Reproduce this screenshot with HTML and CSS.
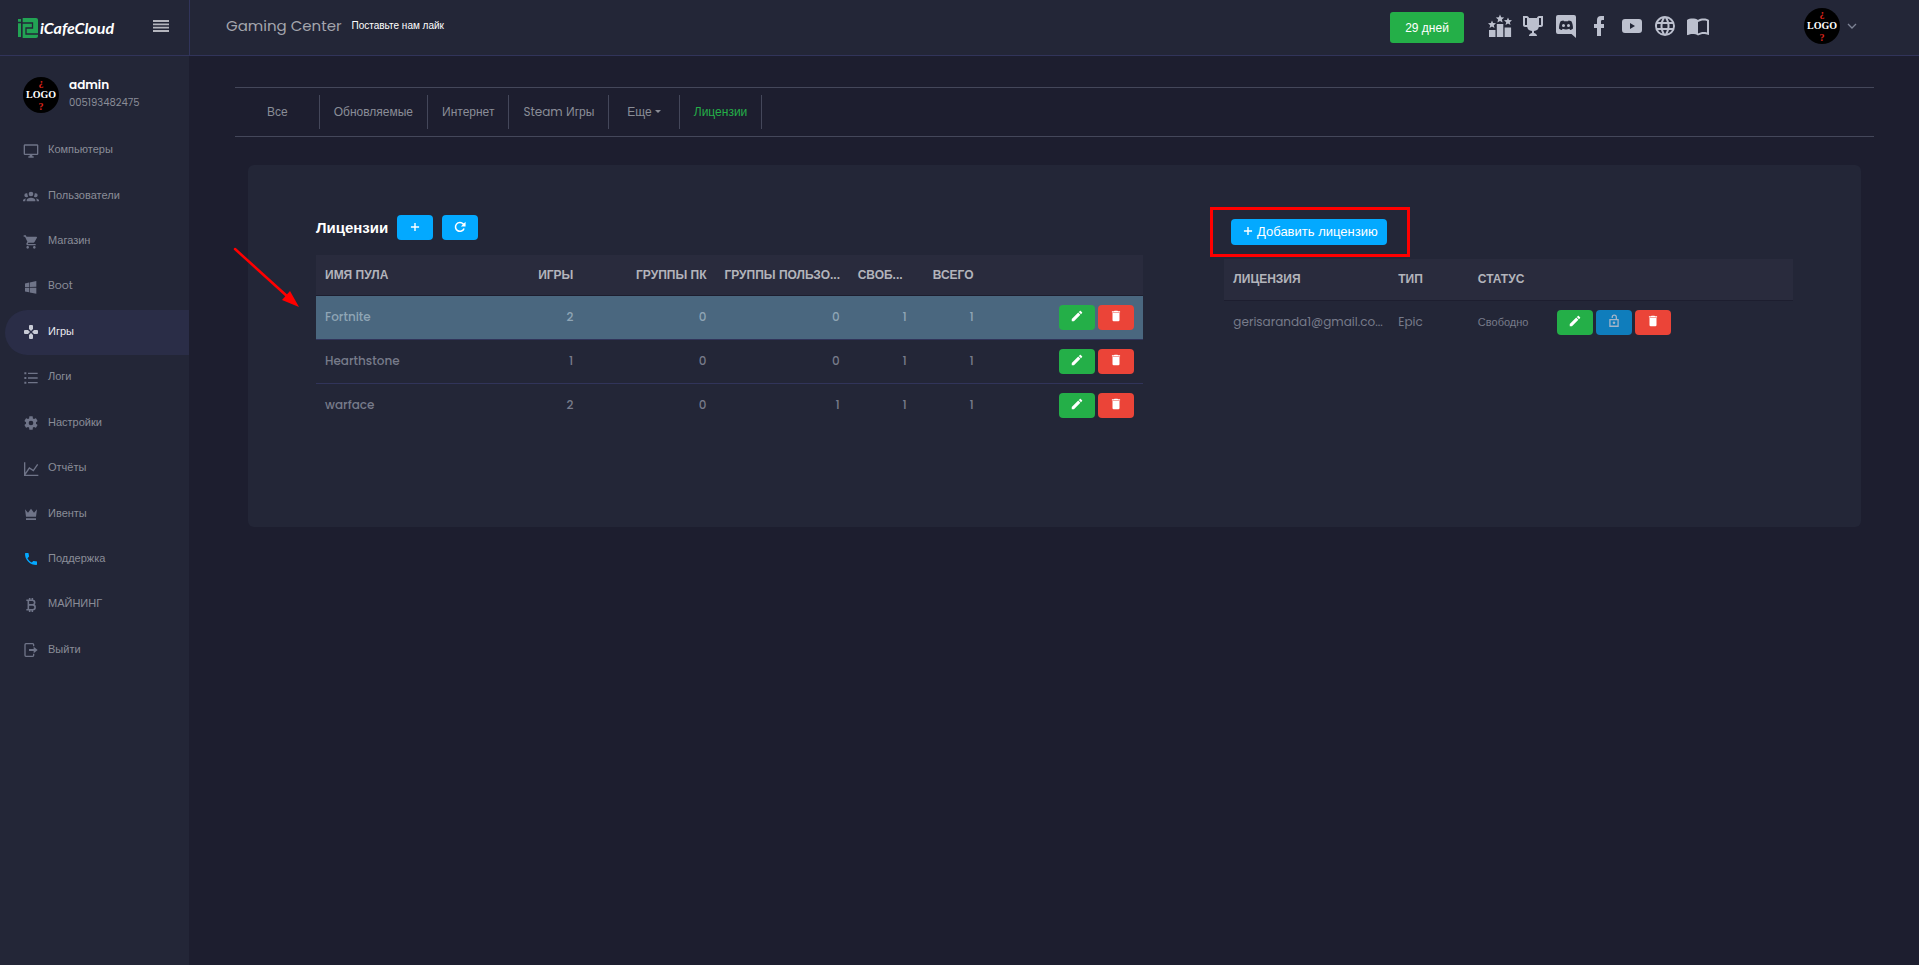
FILE: index.html
```html
<!DOCTYPE html>
<html lang="ru">
<head>
<meta charset="utf-8">
<title>iCafeCloud</title>
<link rel="stylesheet" href="styles.css">
</head>
<body>
<svg class="sprite" aria-hidden="true">
  <symbol id="pencil" viewBox="0 0 24 24"><path d="M20.7 7c.4-.4.4-1 0-1.400l-2.300-2.300c-.4-.4-1-.4-1.400 0l-1.900 1.800 3.800 3.800M3 17.200V21h3.800L17.800 9.900l-3.700-3.700z"/></symbol>
  <symbol id="trash" viewBox="0 0 24 24"><path d="M19 4h-3.500l-1-1h-5l-1 1H5v2h14M6 19a2 2 0 0 0 2 2h8a2 2 0 0 0 2-2V7H6z"/></symbol>
  <symbol id="plus" viewBox="0 0 24 24"><path d="M19 13.200h-5.800V19h-2.400v-5.800H5v-2.400h5.800V5h2.400v5.800H19z"/></symbol>
</svg>

<header class="topbar">
  <div class="brand">
    <a class="logo" href="#">
      <svg width="20" height="20" viewBox="0 0 20 20" aria-hidden="true">
        <path fill="#22a354" d="M0 1h3v3H0zM0 5h3v14H0zM4 0h14a2 2 0 0 1 2 2v16a2 2 0 0 1-2 2H4v-1z"/>
        <path fill="none" stroke="#232637" stroke-width="1.300" d="M4 0v20M4 5h10.500v5H8v6h12M0 4.500h4"/>
      </svg>
      <span>iCafeCloud</span>
    </a>
    <button class="menu-toggle" aria-label="Меню">
      <svg width="16" height="12" viewBox="0 0 16 12"><path d="M0 1h16M0 4.300h16M0 7.600h16M0 11h16" stroke="currentColor" stroke-width="1.800"/></svg>
    </button>
  </div>
  <div class="center-name latin">Gaming Center</div>
  <a class="like" href="#">Поставьте нам лайк</a>
  <button class="days">29 дней</button>
  <nav class="socials" aria-label="Ссылки">
    <a href="#" aria-label="Рейтинг"><svg viewBox="0 0 24 24"><path d="M1 16h6.500v7H1zM8.800 10h6.500v13H8.800zM16.600 13.500h6.500V23h-6.500zM12 .5l1.200 2.800 3 .3-2.300 2 .7 3L12 7 9.400 8.600l.7-3-2.300-2 3-.3zM4 6.500l1.100 2.600 2.900.2-2.200 1.900.7 2.800L4 12.500 1.500 14l.7-2.800L0 9.300l2.900-.2zM20 3.500l1.100 2.600 2.900.2-2.200 1.900.7 2.800-2.500-1.500-2.500 1.500.7-2.800L16 6.300l2.900-.2z"/></svg></a>
    <a href="#" aria-label="Турниры"><svg viewBox="0 0 24 24"><path d="M18 2C17.100 2 16 3 16 4H8C8 3 6.900 2 6 2H2V11C2 12 3 13 4 13H6.200C6.600 15 7.900 16.700 11 17V19.080C8 19.540 8 22 8 22H16C16 22 16 19.540 13 19.080V17C16.100 16.700 17.400 15 17.800 13H20C21 13 22 12 22 11V2H18M6 11H4V4H6V11M20 11H18V4H20V11Z"/></svg></a>
    <a href="#" aria-label="Discord"><svg viewBox="0 0 24 24"><path fill-rule="evenodd" d="M4 1h16a2 2 0 0 1 2 2v21l-4.500-4H4a2 2 0 0 1-2-2V3a2 2 0 0 1 2-2zM9.500 6.500C7.500 6.700 6.500 7.500 6.500 7.500 5.500 9.500 5 12 5 14.500c1 1.200 2.800 1.500 2.800 1.500l.9-1.200c2 .8 4.600.8 6.600 0l.9 1.200s1.800-.3 2.800-1.500c0-2.500-.5-5-1.500-7 0 0-1-.8-3-1l-.4.8h-4.200zM9.500 10a1.500 1.500 0 1 1 0 3 1.500 1.500 0 0 1 0-3zM14.500 10a1.500 1.500 0 1 1 0 3 1.500 1.500 0 0 1 0-3z"/></svg></a>
    <a href="#" aria-label="Facebook"><svg viewBox="0 0 24 24"><path d="M17,2V6H15C14.310,6 14,6.810 14,7.500V10H17V14H14V22H10V14H7V10H10V6A4,4 0 0,1 14,2Z"/></svg></a>
    <a href="#" aria-label="YouTube"><svg viewBox="0 0 24 24"><path fill-rule="evenodd" d="M5 5h14a3 3 0 0 1 3 3v8a3 3 0 0 1-3 3H5a3 3 0 0 1-3-3V8a3 3 0 0 1 3-3zM10 9v6l5-3z"/></svg></a>
    <a href="#" aria-label="Сайт"><svg viewBox="0 0 24 24"><path d="M16.360,14C16.440,13.340 16.500,12.680 16.500,12C16.500,11.320 16.440,10.660 16.360,10H19.740C19.900,10.640 20,11.310 20,12C20,12.690 19.900,13.360 19.740,14M14.590,19.560C15.190,18.450 15.650,17.250 15.970,16H18.920C17.960,17.650 16.430,18.930 14.590,19.560M14.340,14H9.660C9.560,13.340 9.500,12.680 9.500,12C9.500,11.320 9.560,10.650 9.660,10H14.340C14.430,10.650 14.500,11.320 14.500,12C14.500,12.680 14.430,13.340 14.340,14M12,19.960C11.170,18.760 10.500,17.430 10.090,16H13.910C13.500,17.430 12.830,18.760 12,19.960M8,8H5.080C6.030,6.340 7.570,5.060 9.400,4.440C8.800,5.550 8.350,6.750 8,8M5.080,16H8C8.350,17.250 8.800,18.450 9.400,19.560C7.570,18.930 6.030,17.650 5.080,16M4.260,14C4.100,13.360 4,12.690 4,12C4,11.310 4.100,10.640 4.260,10H7.640C7.560,10.660 7.500,11.320 7.500,12C7.500,12.680 7.560,13.340 7.640,14M12,4.030C12.830,5.230 13.500,6.570 13.910,8H10.090C10.500,6.570 11.170,5.230 12,4.030M18.920,8H15.970C15.650,6.750 15.190,5.550 14.590,4.440C16.430,5.070 17.960,6.340 18.920,8M12,2C6.470,2 2,6.500 2,12A10,10 0 0,0 12,22A10,10 0 0,0 22,12A10,10 0 0,0 12,2Z"/></svg></a>
    <a href="#" aria-label="Справка"><svg viewBox="0 0 24 24"><path d="M21,5C19.890,4.650 18.670,4.500 17.500,4.500C15.550,4.500 13.450,4.900 12,6C10.550,4.900 8.450,4.500 6.500,4.500C4.550,4.500 2.450,4.900 1,6V20.650C1,20.900 1.250,21.150 1.500,21.150C1.600,21.150 1.650,21.100 1.750,21.100C3.100,20.450 5.050,20 6.500,20C8.450,20 10.550,20.400 12,21.500C13.350,20.650 15.800,20 17.500,20C19.150,20 20.850,20.300 22.250,21.050C22.350,21.100 22.400,21.100 22.500,21.100C22.750,21.100 23,20.850 23,20.600V6C22.400,5.550 21.750,5.250 21,5M21,18.500C19.900,18.150 18.700,18 17.500,18C15.800,18 13.350,18.650 12,19.500V8C13.350,7.150 15.800,6.500 17.500,6.500C18.700,6.500 19.900,6.650 21,7V18.500Z"/></svg></a>
  </nav>
  <button class="account" aria-label="Аккаунт">
    <span class="avatar"><i>¿</i><b>LOGO</b><i>?</i></span>
    <svg width="10" height="6" viewBox="0 0 10 6"><path d="M1 1l4 4 4-4" fill="none" stroke="#7d8395" stroke-width="1.300"/></svg>
  </button>
</header>

<div class="shell">
  <aside class="sidebar">
    <div class="profile">
      <span class="avatar"><i>¿</i><b>LOGO</b><i>?</i></span>
      <div class="profile-text latin">
        <div class="profile-name">admin</div>
        <div class="profile-id">005193482475</div>
      </div>
    </div>
    <nav class="side-nav">
      <a href="#"><svg viewBox="0 0 24 24"><path d="M21,16H3V4H21M21,2H3C1.890,2 1,2.890 1,4V16A2,2 0 0,0 3,18H10V20H8V22H16V20H14V18H21A2,2 0 0,0 23,16V4C23,2.890 22.100,2 21,2Z"/></svg><span>Компьютеры</span></a>
      <a href="#"><svg viewBox="0 0 24 24"><path d="M12,5.500A3.500,3.500 0 0,1 15.500,9A3.500,3.500 0 0,1 12,12.500A3.500,3.500 0 0,1 8.500,9A3.500,3.500 0 0,1 12,5.500M5,8C5.560,8 6.080,8.150 6.530,8.420C6.380,9.850 6.800,11.270 7.660,12.380C7.160,13.340 6.160,14 5,14A3,3 0 0,1 2,11A3,3 0 0,1 5,8M19,8A3,3 0 0,1 22,11A3,3 0 0,1 19,14C17.840,14 16.840,13.340 16.340,12.380C17.200,11.270 17.620,9.850 17.470,8.420C17.920,8.150 18.440,8 19,8M5.500,18.250C5.500,16.180 8.410,14.500 12,14.500C15.590,14.500 18.500,16.180 18.500,18.250V20H5.500V18.250M0,20V18.500C0,17.110 1.890,15.940 4.450,15.600C3.860,16.280 3.500,17.220 3.500,18.250V20H0M24,20H20.500V18.250C20.500,17.220 20.140,16.280 19.550,15.600C22.110,15.940 24,17.110 24,18.500V20Z"/></svg><span>Пользователи</span></a>
      <a href="#"><svg viewBox="0 0 24 24"><path d="M17,18C15.890,18 15,18.890 15,20A2,2 0 0,0 17,22A2,2 0 0,0 19,20C19,18.890 18.100,18 17,18M1,2V4H3L6.600,11.590L5.240,14.040C5.090,14.320 5,14.650 5,15A2,2 0 0,0 7,17H19V15H7.420A0.250,0.250 0 0,1 7.170,14.750C7.170,14.700 7.180,14.660 7.200,14.630L8.100,13H15.550C16.300,13 16.960,12.580 17.300,11.970L20.880,5.500C20.950,5.340 21,5.170 21,5A1,1 0 0,0 20,4H5.210L4.270,2M7,18C5.890,18 5,18.890 5,20A2,2 0 0,0 7,22A2,2 0 0,0 9,20C9,18.890 8.100,18 7,18Z"/></svg><span>Магазин</span></a>
      <a href="#" class="latin"><svg viewBox="0 0 24 24"><path d="M3,12V6.750L9,5.430V11.910L3,12M20,3V11.750L10,11.900V5.210L20,3M3,13L9,13.090V19.900L3,18.750V13M20,13.250V22L10,20.090V13.100L20,13.250Z"/></svg><span>Boot</span></a>
      <a href="#" class="active" aria-current="page"><svg viewBox="0 0 24 24"><path d="M16.500 9l-3 3 3 3H21a1.500 1.500 0 0 0 1.500-1.500v-3A1.500 1.500 0 0 0 21 9M9 16.500V21a1.500 1.500 0 0 0 1.500 1.500h3A1.500 1.500 0 0 0 15 21v-4.500l-3-3M7.500 9H3a1.500 1.500 0 0 0-1.500 1.500v3A1.500 1.500 0 0 0 3 15h4.500l3-3M15 7.500V3a1.500 1.500 0 0 0-1.500-1.500h-3A1.500 1.500 0 0 0 9 3v4.500l3 3z"/></svg><span>Игры</span></a>
      <a href="#"><svg viewBox="0 0 24 24"><path d="M7.500 4H22v2H7.500zM7.500 11H22v2H7.500zM7.500 18H22v2H7.500zM2 3.500h3v3H2zM2 10.500h3v3H2zM2 17.500h3v3H2z"/></svg><span>Логи</span></a>
      <a href="#"><svg viewBox="0 0 24 24"><path d="M12,15.500A3.500,3.500 0 0,1 8.500,12A3.500,3.500 0 0,1 12,8.500A3.500,3.500 0 0,1 15.500,12A3.500,3.500 0 0,1 12,15.500M19.430,12.970C19.470,12.650 19.500,12.330 19.500,12C19.500,11.670 19.470,11.340 19.430,11L21.540,9.370C21.730,9.220 21.780,8.950 21.660,8.730L19.660,5.270C19.540,5.050 19.270,4.960 19.050,5.050L16.560,6.050C16.040,5.660 15.500,5.320 14.870,5.070L14.500,2.420C14.460,2.180 14.250,2 14,2H10C9.750,2 9.540,2.180 9.500,2.420L9.130,5.070C8.500,5.320 7.960,5.660 7.440,6.050L4.950,5.050C4.730,4.960 4.460,5.050 4.340,5.270L2.340,8.730C2.210,8.950 2.270,9.220 2.460,9.370L4.570,11C4.530,11.340 4.500,11.670 4.500,12C4.500,12.330 4.530,12.650 4.570,12.970L2.460,14.630C2.270,14.780 2.210,15.050 2.340,15.270L4.340,18.730C4.460,18.950 4.730,19.030 4.950,18.950L7.440,17.940C7.960,18.340 8.500,18.680 9.130,18.930L9.500,21.580C9.540,21.820 9.750,22 10,22H14C14.250,22 14.460,21.820 14.500,21.580L14.870,18.930C15.500,18.670 16.040,18.340 16.560,17.940L19.050,18.950C19.270,19.030 19.540,18.950 19.660,18.730L21.660,15.270C21.780,15.050 21.730,14.780 21.540,14.630L19.430,12.970Z"/></svg><span>Настройки</span></a>
      <a href="#"><svg viewBox="0 0 24 24"><path d="M2.500 2v19.500H23M3 20l6.500-9.500 6 4L22 5" fill="none" stroke="currentColor" stroke-width="2"/></svg><span>Отчёты</span></a>
      <a href="#"><svg viewBox="0 0 24 24"><path d="M3 5l4.500 5L12 4l4.500 6L21 5l-1.500 11h-15zM4.500 18.500h15v2.500h-15z"/></svg><span>Ивенты</span></a>
      <a href="#" class="support"><svg viewBox="0 0 24 24"><path d="M6.620,10.790C8.060,13.620 10.380,15.940 13.210,17.380L15.410,15.180C15.690,14.900 16.080,14.820 16.430,14.930C17.550,15.300 18.750,15.500 20,15.500A1,1 0 0,1 21,16.500V20A1,1 0 0,1 20,21A17,17 0 0,1 3,4A1,1 0 0,1 4,3H7.500A1,1 0 0,1 8.500,4C8.500,5.250 8.700,6.450 9.070,7.570C9.180,7.920 9.100,8.310 8.820,8.590L6.620,10.790Z"/></svg><span>Поддержка</span></a>
      <a href="#"><svg viewBox="0 0 24 24"><path d="M5 4.800h9a3.500 3.500 0 0 1 0 7H8.500M8 4.800v14.400M5 19.200h9.500a3.700 3.700 0 0 0 0-7.400M10 1.500v3.300M14 1.500v3.300M10 19.200v3.300M14 19.200v3.300" fill="none" stroke="currentColor" stroke-width="2.400"/></svg><span>МАЙНИНГ</span></a>
      <a href="#"><svg viewBox="0 0 24 24"><path d="M16 6.500V4a1.500 1.500 0 0 0-1.500-1.500h-10A1.500 1.500 0 0 0 3 4v16a1.500 1.500 0 0 0 1.500 1.500h10A1.500 1.500 0 0 0 16 20v-2.500" fill="none" stroke="currentColor" stroke-width="2"/><path d="M9 10.500h7V7l6 5-6 5v-3.500H9z"/></svg><span>Выйти</span></a>
    </nav>
  </aside>

  <main class="content">
    <nav class="tabs">
      <a href="#">Все</a>
      <a href="#">Обновляемые</a>
      <a href="#">Интернет</a>
      <a href="#"><span class="latin">Steam</span> Игры</a>
      <a href="#" class="more">Еще</a>
      <a href="#" class="current" aria-current="page">Лицензии</a>
    </nav>

    <section class="card">
      <div class="pools">
        <div class="pools-head">
          <h2>Лицензии</h2>
          <button class="btn blue" aria-label="Добавить"><svg><use href="#plus"/></svg></button>
          <button class="btn blue" aria-label="Обновить"><svg viewBox="0 0 24 24"><path d="M19 14.500A7.600 7.600 0 1 1 17.500 6.700L20 9.200" fill="none" stroke="currentColor" stroke-width="2.600"/><path d="M21.500 3v8h-8z"/></svg></button>
        </div>
        <table>
          <colgroup><col class="w-wide"><col class="w-wide"><col class="w-wide"><col class="w-wide"><col class="w-slim"><col class="w-slim"><col></colgroup>
          <thead>
            <tr><th>ИМЯ ПУЛА</th><th class="num">ИГРЫ</th><th class="num">ГРУППЫ ПК</th><th class="clip" title="ГРУППЫ ПОЛЬЗОВАТЕЛЕЙ">ГРУППЫ ПОЛЬЗО...</th><th title="СВОБОДНО">СВОБ...</th><th class="num">ВСЕГО</th><th></th></tr>
          </thead>
          <tbody class="latin strong">
            <tr class="selected"><td>Fortnite</td><td class="num">2</td><td class="num">0</td><td class="num">0</td><td class="num">1</td><td class="num">1</td><td><div class="actions"><button class="btn green" aria-label="Изменить"><svg><use href="#pencil"/></svg></button><button class="btn red" aria-label="Удалить"><svg><use href="#trash"/></svg></button></div></td></tr>
            <tr><td>Hearthstone</td><td class="num">1</td><td class="num">0</td><td class="num">0</td><td class="num">1</td><td class="num">1</td><td><div class="actions"><button class="btn green" aria-label="Изменить"><svg><use href="#pencil"/></svg></button><button class="btn red" aria-label="Удалить"><svg><use href="#trash"/></svg></button></div></td></tr>
            <tr><td>warface</td><td class="num">2</td><td class="num">0</td><td class="num">1</td><td class="num">1</td><td class="num">1</td><td><div class="actions"><button class="btn green" aria-label="Изменить"><svg><use href="#pencil"/></svg></button><button class="btn red" aria-label="Удалить"><svg><use href="#trash"/></svg></button></div></td></tr>
          </tbody>
        </table>
        <svg class="arrow" width="70" height="64" viewBox="0 0 70 64" aria-hidden="true"><path d="M3 2L56 50" stroke="#f00" stroke-width="2.500" stroke-linecap="round"/><path d="M67 60L50 53l8-9z" fill="#f00"/></svg>
      </div>

      <div class="licenses">
        <div class="add-row">
          <button class="btn blue add"><svg><use href="#plus"/></svg>Добавить лицензию</button>
          <span class="highlight"></span>
        </div>
        <table>
          <colgroup><col class="l-name"><col class="l-type"><col class="l-type"><col></colgroup>
          <thead><tr><th>ЛИЦЕНЗИЯ</th><th>ТИП</th><th>СТАТУС</th><th></th></tr></thead>
          <tbody>
            <tr><td class="latin clip">gerisaranda1@gmail.co...</td><td class="latin">Epic</td><td class="state">Свободно</td><td><div class="actions start"><button class="btn green" aria-label="Изменить"><svg><use href="#pencil"/></svg></button><button class="btn navy" aria-label="Разблокировать" disabled><svg viewBox="0 0 24 24"><path d="M5 9.500h14v11.500H5zM9 7V5.500a3.500 3.500 0 0 1 7 0v4" fill="none" stroke="currentColor" stroke-width="2.200"/><circle cx="12" cy="15" r="2.200"/></svg></button><button class="btn red" aria-label="Удалить"><svg><use href="#trash"/></svg></button></div></td></tr>
          </tbody>
        </table>
      </div>
    </section>
  </main>
</div>
</body>
</html>
```
FILE: styles.css
```css
* { box-sizing: border-box; }

body {
  margin: 0;
  min-height: 100vh;
  display: flex;
  flex-direction: column;
  background: #1d1e2f;
  color: #8a8d97;
  font: 12px/16px "Liberation Sans", Arial, sans-serif;
}

a { color: inherit; text-decoration: none; }
button { font: inherit; color: inherit; border: 0; padding: 0; background: none; }
svg { fill: currentColor; display: block; flex: none; }
.latin { font-family: Poppins, Inter, sans-serif; }
.sprite { position: absolute; width: 0; height: 0; }

.avatar {
  display: flex;
  flex-direction: column;
  align-items: center;
  justify-content: center;
  flex: none;
  width: 36px;
  height: 36px;
  border-radius: 50%;
  background: #000;
  font: bold 10px/12px "Liberation Serif", serif;
}
.avatar b { color: #fff; }
.avatar i { color: #e1251b; font-style: normal; }

/* top bar */
.topbar {
  display: flex;
  align-items: center;
  height: 56px;
  background: #232637;
  border-bottom: 1px solid #31345a;
}
.brand {
  display: flex;
  align-items: center;
  justify-content: space-between;
  align-self: stretch;
  width: 190px;
  padding: 0 20px 0 18px;
  border-right: 1px solid #31345a;
}
.logo { display: flex; align-items: center; gap: 2px; color: #fff; font: italic 700 16px/20px Lato, sans-serif; }
.menu-toggle { color: #b4b5bd; padding-bottom: 4px; }
.center-name { margin-left: 36px; font-size: 15px; color: #a3a5ad; padding-bottom: 4px; }
.like { margin-left: 10px; font-size: 10px; color: #fff; padding-bottom: 4px; }
.days {
  width: 74px;
  height: 31px;
  margin-left: auto;
  border-radius: 3px;
  background: #24af48;
  color: #fff;
}
.socials { display: flex; gap: 9px; margin: 0 94px 4px 24px; color: #bcc0ce; }
.socials svg { width: 24px; height: 24px; }
.account { display: flex; align-items: center; gap: 7px; margin: 0 62px 4px 0; }

.shell { display: flex; flex: 1; }

/* sidebar */
.sidebar { width: 189px; background: #232637; }
.profile { display: flex; align-items: center; gap: 10px; height: 72px; padding: 5px 0 0 23px; }
.profile-text { padding-bottom: 1px; }
.profile-name { color: #fff; font-size: 12px; font-weight: 600; line-height: 18px; }
.profile-id { font-size: 10px; line-height: 18px; }
.side-nav { display: grid; grid-template-rows: repeat(12, 1fr); height: 545px; padding-left: 5px; font-size: 11px; }
.side-nav a { display: flex; align-items: center; gap: 9px; padding-left: 18px; border-radius: 23px 0 0 23px; }
.side-nav svg { width: 16px; height: 16px; color: #6f7488; }
.side-nav span { padding-bottom: 3px; }
.side-nav .active { background: #2a2d47; color: #e8e9ee; }
.side-nav .active svg { color: #c8cbd6; }
.side-nav .support svg { color: #03a9ff; }

/* content */
.content { flex: 1; min-width: 0; padding: 31px 45px 0 46px; }
.tabs { display: flex; padding: 7px 0; border: solid #44475a; border-width: 1px 0; }
.tabs a { padding: 9px 14px; border-right: 1px solid #44475a; }
.tabs a:first-child { padding-left: 32px; padding-right: 31px; }
.tabs .more { padding-left: 18px; padding-right: 18px; }
.more::after {
  content: "";
  display: inline-block;
  margin-left: 3px;
  vertical-align: 3px;
  border: 3px solid transparent;
  border-top-color: currentColor;
  border-bottom: 0;
}
.tabs .current { color: #24af48; }

.card {
  display: flex;
  justify-content: space-between;
  min-height: 362px;
  margin: 28px 13px 0;
  padding: 50px 68px;
  border-radius: 6px;
  background: #232637;
}
.pools { position: relative; width: 56%; }
.licenses { width: 38.5%; }
.pools-head { display: flex; align-items: center; gap: 9px; height: 40px; padding-bottom: 15px; }
h2 { margin: 0; font-size: 15px; line-height: 20px; color: #fff; }

.btn {
  display: flex;
  align-items: center;
  justify-content: center;
  width: 36px;
  height: 25px;
  border-radius: 4px;
  color: #fff;
}
.btn svg { width: 14px; height: 14px; margin-bottom: 2px; }
.blue { background: #03a9ff; }
.green { background: #24af48; }
.red { background: #eb4438; }
.navy { background: #0f7dbc; color: #a5b5c8; }

table { width: 100%; border-collapse: collapse; table-layout: fixed; }
th, td { padding: 0 9px; text-align: left; white-space: nowrap; }
th { height: 40px; background: #292b3d; border-bottom: 1px solid #1d1e2f; color: #b3b4bb; font-size: 12px; }
.licenses th { height: 41px; }
td { height: 44px; color: #777b8a; }
tr + tr td { border-top: 1px solid #31345a; }
.strong { font-weight: 500; }
.num { text-align: right; }
.clip { padding-right: 0; }
.selected td { background: #4a677f; color: #8fa5b5; }
.actions { display: flex; justify-content: flex-end; gap: 3px; }
.start { justify-content: flex-start; }
.state { font-size: 11px; }

.w-wide { width: 16.1%; }
.w-slim { width: 8.1%; }
.l-name { width: 29%; }
.l-type { width: 14%; }

.add-row { position: relative; padding: 4px 0 14px 7px; }
.add { width: 156px; height: 26px; font-size: 13px; gap: 2px; }
.highlight { position: absolute; left: -14px; top: -8px; width: 200px; height: 50px; border: 3px solid #f00; }
.arrow { position: absolute; left: -84px; top: 32px; }
```
